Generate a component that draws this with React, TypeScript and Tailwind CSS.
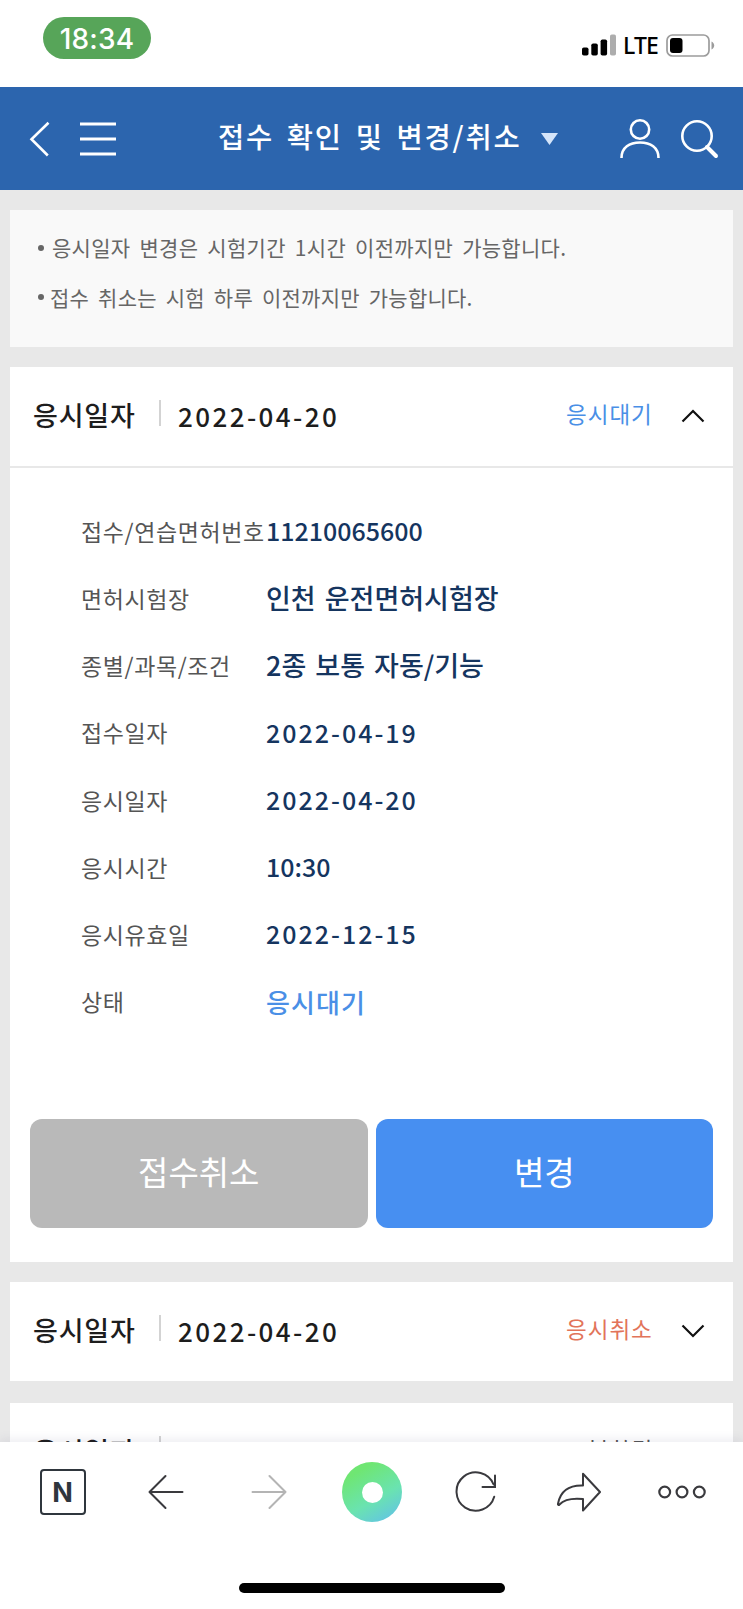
import type { ReactNode } from 'react'

type Detail = {
  label: string
  value: string
  kind?: 'code' | 'date' | 'text' | 'status'
}

const details: Detail[] = [
  { label: '접수/연습면허번호', value: '11210065600', kind: 'code' },
  { label: '면허시험장', value: '인천 운전면허시험장' },
  { label: '종별/과목/조건', value: '2종 보통 자동/기능' },
  { label: '접수일자', value: '2022-04-19', kind: 'date' },
  { label: '응시일자', value: '2022-04-20', kind: 'date' },
  { label: '응시시간', value: '10:30', kind: 'code' },
  { label: '응시유효일', value: '2022-12-15', kind: 'date' },
  { label: '상태', value: '응시대기', kind: 'status' },
]

const valueStyles = {
  code: 'text-[25px] text-[#15355f]',
  date: 'text-[25px] tracking-[2px] text-[#15355f]',
  text: 'text-[27px] [word-spacing:3px] text-[#15355f]',
  status: 'text-[26px] tracking-[1.1px] text-[#4a8fe6]',
}

function StatusBar() {
  return (
    <div className="flex h-[87px] shrink-0 items-start justify-between bg-white pl-[43px] pr-7 pt-[17px]">
      <div className="flex h-[42px] w-[108px] items-center justify-center rounded-full bg-[#57a559] pt-0.5 font-['Inter',sans-serif] text-[28px] font-medium tracking-[0.2px] text-white">
        18:34
      </div>
      <div className="mt-4 flex h-6 items-center">
        <svg width="34" height="22" viewBox="0 0 34 22">
          <rect x="0" y="13.5" width="6.5" height="8" rx="1.8" />
          <rect x="9.3" y="9.5" width="6.5" height="12" rx="1.8" />
          <rect x="18.6" y="5.5" width="6.5" height="16" rx="1.8" />
          <rect x="28" y="0.5" width="6" height="21" rx="1.8" fill="#adadad" />
        </svg>
        <span className="ml-[7px] w-[36px] whitespace-nowrap font-['Noto_Sans',sans-serif] text-[23px] font-medium leading-6 tracking-[-0.9px] text-black">
          LTE
        </span>
        <svg className="ml-[7px]" width="49" height="23" viewBox="0 0 49 23">
          <rect x="1" y="1" width="42" height="21" rx="5.5" fill="none" stroke="#9c9c9c" strokeWidth="1.7" />
          <rect x="4" y="4" width="12.5" height="15" rx="3" />
          <path d="M45.5 7.5c3.6 1.4 3.6 6.6 0 8z" fill="#9c9c9c" />
        </svg>
      </div>
    </div>
  )
}

function TitleBar() {
  return (
    <header className="flex h-[103px] shrink-0 items-center bg-[#2c65ae] text-white">
      <svg className="ml-[29px]" width="22" height="36" viewBox="0 0 22 36" fill="none" stroke="currentColor" strokeWidth="2.6">
        <path d="M19.5 1.8 2.5 18.2 18.8 34.5" />
      </svg>
      <svg className="ml-[29px]" width="36" height="34" viewBox="0 0 36 34" stroke="currentColor" strokeWidth="3">
        <path d="M0 2h36M0 17h36M0 32h36" />
      </svg>
      <h1 className="mb-1 ml-[102px] w-[304px] whitespace-nowrap text-[28.5px] font-medium leading-none tracking-[1.8px] [word-spacing:4.6px]">
        접수 확인 및 변경/취소
      </h1>
      <svg className="ml-[19px]" width="17" height="12" viewBox="0 0 17 12">
        <path d="M0 0h17L8.5 12z" fill="#d5e5fa" />
      </svg>
      <svg className="ml-[62px]" width="40" height="42" viewBox="0 0 40 42" fill="none" stroke="currentColor" strokeWidth="2.6">
        <circle cx="20" cy="11.5" r="9.2" />
        <path d="M1.5 40C1.500 29.5 9.500 24.5 20 24.5S38.500 29.5 38.500 40" />
      </svg>
      <svg className="ml-[21px]" width="38" height="40" viewBox="0 0 38 40" fill="none" stroke="currentColor">
        <circle cx="16" cy="17" r="14.7" strokeWidth="2.6" />
        <path d="M26 28l9 9" strokeWidth="4" strokeLinecap="round" />
      </svg>
    </header>
  )
}

function Notice() {
  return (
    <ul className="mx-2.5 mt-5 h-[136.5px] bg-[#f9f9f9] pl-7 pt-[13px] text-[21px] leading-[49.5px] text-[#666] [word-spacing:4px]">
      <li className="flex items-center whitespace-nowrap">
        <i className="mr-2 size-1.5 rounded-full bg-[#666]" />
        <span className="tracking-[0.3px]">응시일자 변경은 시험기간 1시간 이전까지만 가능합니다.</span>
      </li>
      <li className="flex items-center whitespace-nowrap">
        <i className="mr-1.5 size-1.5 rounded-full bg-[#666]" />
        <span className="tracking-[0.25px]">접수 취소는 시험 하루 이전까지만 가능합니다.</span>
      </li>
    </ul>
  )
}

function Chevron({ up = false }: { up?: boolean }) {
  return (
    <svg width="24" height="14" viewBox="0 0 24 14" fill="none" stroke="#111" strokeWidth="2.2">
      <path d={up ? 'M1.5 12.5 12 2l10.5 10.5' : 'M1.5 1.5 12 12 22.5 1.5'} />
    </svg>
  )
}

type CardHeaderProps = {
  date: string
  status: string
  statusClass: string
  open?: boolean
}

function CardHeader({ date, status, statusClass, open }: CardHeaderProps) {
  return (
    <div className="flex h-[99px] items-center whitespace-nowrap pl-[23px] pr-7 text-[#1d1d1d]">
      <span className="mb-0.5 w-[126px] text-[27px] font-medium tracking-[0.8px]">응시일자</span>
      <span className="mb-1.5 h-[26px] w-0.5 bg-[#d3d3d3]" />
      <span className="mb-0.5 ml-[17px] text-[26px] font-medium tracking-[2.4px]">{date}</span>
      <span className={`mb-1 ml-auto mr-[27px] w-[88px] text-[22.5px] tracking-[1px] ${statusClass}`}>{status}</span>
      <Chevron up={open} />
    </div>
  )
}

function Card({ children, className = '' }: { children: ReactNode; className?: string }) {
  return <section className={`mx-2.5 bg-white ${className}`}>{children}</section>
}

function BottomBar() {
  return (
    <nav className="relative h-[167px] shrink-0 bg-white shadow-[0_-2px_10px_rgba(60,60,110,0.1)]">
      <div className="grid h-[100px] grid-cols-7 place-items-center pl-[11px] pr-[9px] text-[#3a3a3e]">
        <span className="flex size-[46px] items-center justify-center rounded-[4px] border-2 border-current font-['Inter',sans-serif] text-[27px] font-bold leading-none text-[#2f363d]">
          N
        </span>
        <svg width="36" height="36" viewBox="0 0 36 36" fill="none" stroke="currentColor" strokeWidth="2" strokeLinecap="round" strokeLinejoin="round">
          <path d="M34.5 18h-33M17.5 2l-16 16 16 16" />
        </svg>
        <svg width="36" height="36" viewBox="0 0 36 36" fill="none" stroke="#b4b4b4" strokeWidth="2" strokeLinecap="round" strokeLinejoin="round">
          <path d="M1.5 18h33M18.5 2l16 16-16 16" />
        </svg>
        <span className="flex size-[60px] items-center justify-center rounded-full bg-[linear-gradient(150deg,#6fe673_20%,#6ae3b0_60%,#61bdf0_100%)]">
          <span className="size-[21px] rounded-full bg-white" />
        </span>
        <svg width="42" height="42" viewBox="0 0 42 42" fill="none" stroke="currentColor" strokeWidth="2" strokeLinecap="round">
          <path d="M39.2 25.8A19.2 19.2 0 1 1 38.6 13.5" />
          <path d="M40 4.5V16H27.5" />
        </svg>
        <svg width="44" height="40" viewBox="0 0 44 40" fill="none" stroke="currentColor" strokeWidth="2" strokeLinejoin="round">
          <path d="M26 1.800 43 20 26 38.500V27C16 26 8 26.500 2.500 32.500c-.8.900-1.800.5-1.500-.8C3.200 20 11 13 26 13.500z" />
        </svg>
        <svg width="48" height="14" viewBox="0 0 48 14" fill="none" stroke="currentColor" strokeWidth="2.2">
          <circle cx="6.7" cy="7" r="5.4" />
          <circle cx="24" cy="7" r="5.4" />
          <circle cx="41.3" cy="7" r="5.4" />
        </svg>
      </div>
      <div className="mx-auto mt-[41px] h-2.5 w-[266px] rounded-full bg-black" />
    </nav>
  )
}

export default function App() {
  return (
    <div className="flex h-[1609px] w-[743px] flex-col overflow-hidden bg-[#e8e8e8] font-['Noto_Sans_CJK_KR',sans-serif]">
      <StatusBar />
      <TitleBar />
      <main className="min-h-0 flex-1 overflow-hidden">
        <Notice />

        <Card className="mt-5 h-[895px]">
          <CardHeader date="2022-04-20" status="응시대기" statusClass="text-[#4a8fe6]" open />
          <div className="h-0.5 bg-[#e8e8e8]" />
          <dl className="pl-[71px] pt-[30px]">
            {details.map(({ label, value, kind = 'text' }) => (
              <div key={label} className="flex h-[67.2px] items-center whitespace-nowrap">
                <dt className="w-[185px] shrink-0 text-[23px] tracking-[0.6px] text-[#555]">{label}</dt>
                <dd className={`font-medium ${valueStyles[kind]}`}>{value}</dd>
              </div>
            ))}
          </dl>
          <div className="mt-[84px] flex gap-2 px-5 text-[33px] text-white">
            <button className="h-[109px] flex-1 rounded-xl bg-[#b9b9b9] pb-1">접수취소</button>
            <button className="h-[109px] flex-1 rounded-xl bg-[#478ff1] pb-1">변경</button>
          </div>
        </Card>

        <Card className="mt-5">
          <CardHeader date="2022-04-20" status="응시취소" statusClass="text-[#e2745a]" />
        </Card>

        <Card className="mt-[22px]">
          <CardHeader date="2022-03-25" status="불합격" statusClass="text-[#555] pl-[22px]" />
        </Card>
      </main>
      <BottomBar />
    </div>
  )
}
